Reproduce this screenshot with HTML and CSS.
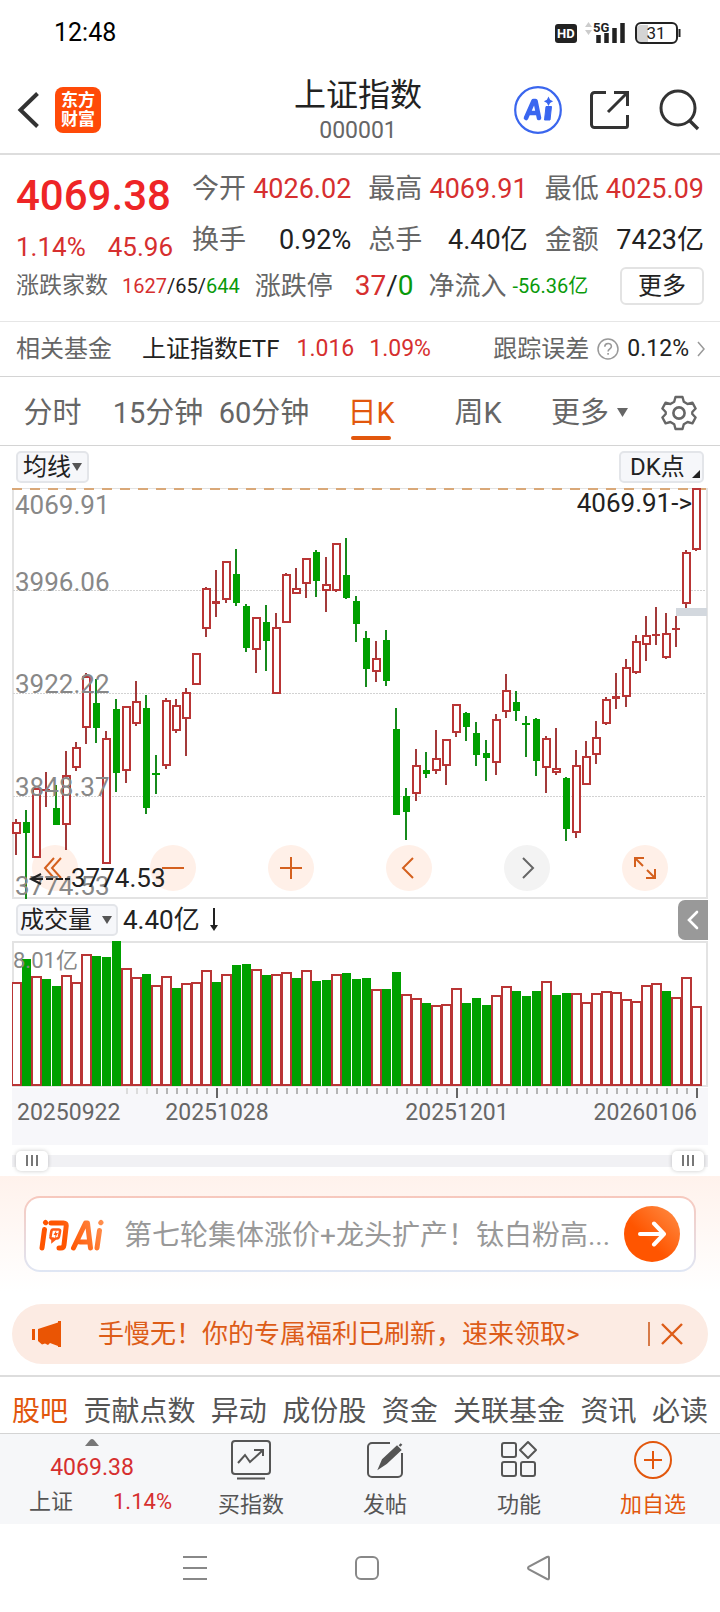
FILE: index.html
```html
<!DOCTYPE html>
<html lang="zh-CN">
<head>
<meta charset="utf-8">
<meta name="viewport" content="width=device-width, initial-scale=1">
<title>上证指数 000001</title>
<link rel="stylesheet" href="styles.css">
</head>
<body>
<div class="status">
  <time class="clock">12:48</time>
  <svg class="status-icons" width="126" height="26" viewBox="0 0 126 26" role="img" aria-label="HD 5G 31%">
    <rect x="0" y="4" width="22" height="19" rx="3" fill="#222"/>
    <text x="2" y="18" font-size="13" font-weight="700" fill="#fff">HD</text>
    <path d="M30 7l3.500-5L37 7zM30 10l3.500 5 3.500-5z" fill="#ccc"/>
    <text x="38" y="12" font-size="13" font-weight="700" fill="#222">5G</text>
    <path d="M43.500 15v8M51.500 13v10M59.500 8v15M67.500 3v20" stroke="#222" stroke-width="4.500"/>
    <path d="M93 5v17h-7a4 4 0 0 1-4-4V9a4 4 0 0 1 4-4z" fill="#d4d4d4"/>
    <rect x="81" y="3" width="41" height="20" rx="5" fill="none" stroke="#222" stroke-width="2"/>
    <path d="M124.500 9v8" stroke="#222" stroke-width="2"/>
    <text x="101" y="19" font-size="17" text-anchor="middle" fill="#222">31</text>
  </svg>
</div>

<header class="header">
  <div class="header-left">
    <button class="icon-btn" aria-label="返回"><svg width="24" height="40" viewBox="0 0 24 40"><path d="M21.500 3.500L4.500 20l17 16.500" fill="none" stroke="#333" stroke-width="4"/></svg></button>
    <span class="logo"><span>东方</span><span>财富</span></span>
  </div>
  <div class="header-title">
    <h1>上证指数</h1>
    <p>000001</p>
  </div>
  <div class="header-right">
    <button class="icon-btn" aria-label="Ai"><svg width="48" height="48" viewBox="0 0 48 48"><circle cx="24" cy="24" r="22.800" fill="#fff" stroke="#3a66ee" stroke-width="2.200"/><path d="M12 32L19.500 15h2L25 32M15.500 27h8" fill="none" stroke="#3a66f0" stroke-width="4.600" stroke-linejoin="round" stroke-linecap="round"/><path d="M32 20.500h5.500L36 34h-5.500z" fill="#3a66f0" stroke="#3a66f0" stroke-linejoin="round"/><path d="M34.500 10.500l1.600 3.200 3 1.600-3 1.600-1.600 3-1.600-3-3-1.600 3-1.600z" fill="#3a66f0"/></svg></button>
    <button class="icon-btn" aria-label="分享"><svg width="42" height="42" viewBox="0 0 42 42"><path d="M17 3.500H5.500a3 3 0 0 0-3 3v29a3 3 0 0 0 3 3h31a2 2 0 0 0 2-2V26M25 3.500h13.500V17M38 4L19 23" fill="none" stroke="#333" stroke-width="3"/></svg></button>
    <button class="icon-btn" aria-label="搜索"><svg width="42" height="42" viewBox="0 0 42 42"><circle cx="20" cy="19" r="17" fill="none" stroke="#333" stroke-width="3"/><path d="M31 31l9 9" stroke="#333" stroke-width="3.400"/></svg></button>
  </div>
</header>

<section class="quote">
  <div class="quote-main">
    <div class="price">
      <strong>4069.38</strong>
      <p><span>1.14%</span><span>45.96</span></p>
    </div>
    <dl class="stats">
      <div><dt>今开</dt><dd class="up">4026.02</dd></div>
      <div><dt>最高</dt><dd class="up">4069.91</dd></div>
      <div><dt>最低</dt><dd class="up">4025.09</dd></div>
      <div><dt>换手</dt><dd>0.92%</dd></div>
      <div><dt>总手</dt><dd>4.40亿</dd></div>
      <div><dt>金额</dt><dd>7423亿</dd></div>
    </dl>
  </div>
  <div class="breadth">
    <span class="lbl-s">涨跌家数</span>
    <span class="num-s"><b class="up">1627</b>/65/<b class="down">644</b></span>
    <span class="lbl">涨跌停</span>
    <span class="num-l"><b class="up">37</b>/<b class="down">0</b></span>
    <span class="lbl">净流入</span>
    <span class="num-s down">-56.36亿</span>
    <button class="more">更多</button>
  </div>
</section>

<section class="fund">
  <span class="muted">相关基金</span>
  <a class="fund-name" href="#etf">上证指数ETF</a>
  <span class="up fund-num">1.016</span>
  <span class="up fund-num">1.09%</span>
  <span class="fund-err"><span class="muted">跟踪误差</span><svg width="22" height="22" viewBox="0 0 22 22" aria-hidden="true"><circle cx="11" cy="11" r="10" fill="none" stroke="#999" stroke-width="1.500"/><path d="M7.800 8.700c0-4.200 6.600-4.200 6.600-.3 0 2.300-3.300 2.500-3.300 5M11.100 15v1.800" fill="none" stroke="#999" stroke-width="1.600"/></svg><span class="fund-num">0.12%</span><svg width="8" height="16" viewBox="0 0 8 16" aria-hidden="true"><path d="M1 1l6 7-6 7" fill="none" stroke="#999" stroke-width="1.500"/></svg></span>
</section>

<nav class="periods">
  <button>分时</button>
  <button>15分钟</button>
  <button>60分钟</button>
  <button class="active">日K</button>
  <button>周K</button>
  <button>更多<svg width="11" height="11" viewBox="0 0 11 11" aria-hidden="true"><path d="M0 1h11L5.500 10z" fill="#666"/></svg></button>
  <button aria-label="设置"><svg width="36" height="36" viewBox="0 0 36 36"><path d="M14.500 2h7l1.300 4.800 3.800 2.200 4.800-1.300 3.200 5.800-3.300 3.500v2l3.300 3.500-3.200 5.800-4.800-1.300-3.800 2.200L21.500 34h-7l-1.300-4.800L9.400 27l-4.800 1.300-3.200-5.800L4.700 19v-2l-3.300-3.500 3.200-5.800L9.400 9l3.800-2.200z" fill="none" stroke="#666" stroke-width="2.400" stroke-linejoin="round"/><circle cx="18" cy="18" r="5.600" fill="none" stroke="#666" stroke-width="2.600"/></svg></button>
</nav>

<main class="charts">
  <div class="bar-top">
    <button class="chip chip-ma">均线<svg width="10" height="10" viewBox="0 0 10 10" aria-hidden="true"><path d="M0 1h10L5 9z" fill="#555"/></svg></button>
    <button class="chip chip-dk">DK点<svg width="8" height="8" viewBox="0 0 8 8" aria-hidden="true"><path d="M8 0v8H0z" fill="#222"/></svg></button>
  </div>
  <div class="kline">
    <svg class="plot" id="kline" viewBox="0 0 696 411" role="img" aria-label="日K线图"></svg>
    <div class="tools">
      <button aria-label="最早"><svg width="24" height="24" viewBox="0 0 24 24"><path d="M11 2L2 12l9 10M18 2L9 12l9 10"/></svg></button>
      <button aria-label="缩小"><svg width="24" height="24" viewBox="0 0 24 24"><path d="M1 12h22"/></svg></button>
      <button aria-label="放大"><svg width="24" height="24" viewBox="0 0 24 24"><path d="M1 12h22M12 1v22"/></svg></button>
      <button aria-label="向左"><svg width="24" height="24" viewBox="0 0 24 24"><path d="M16 2L6 12l10 10"/></svg></button>
      <button class="off" aria-label="向右"><svg width="24" height="24" viewBox="0 0 24 24"><path d="M8 2l10 10L8 22"/></svg></button>
      <button aria-label="全屏"><svg width="24" height="24" viewBox="0 0 24 24"><path d="M11 2H2v9M2 2l8 8M22 13v9h-9M22 22l-8-8"/></svg></button>
    </div>
  </div>
  <div class="bar-vol">
    <button class="chip chip-vol">成交量<svg width="10" height="10" viewBox="0 0 10 10" aria-hidden="true"><path d="M0 1h10L5 9z" fill="#555"/></svg></button>
    <span>4.40亿</span>
    <svg width="10" height="24" viewBox="0 0 10 24" aria-hidden="true"><path d="M5 0v20" stroke="#222" stroke-width="2"/><path d="M1 17h8l-4 6z" fill="#222"/></svg>
    <button class="fold" aria-label="展开"><svg width="12" height="20" viewBox="0 0 12 20"><path d="M10 2L2 10l8 8" fill="none" stroke="#fff" stroke-width="2.600" stroke-linecap="round"/></svg></button>
  </div>
  <svg class="plot" id="volume" viewBox="0 0 696 204" role="img" aria-label="成交量图"></svg>
  <div class="range">
    <span class="grip"><i></i><i></i><i></i></span>
    <span class="grip"><i></i><i></i><i></i></span>
  </div>
</main>

<section class="ask">
  <form class="ask-box">
    <svg class="ask-logo" width="66" height="40" viewBox="0 0 66 40" role="img" aria-label="问Ai">
      <defs><linearGradient id="lg" gradientUnits="userSpaceOnUse" x1="0" y1="36" x2="66" y2="4"><stop offset=".4" stop-color="#ff5500"/><stop offset="1" stop-color="#ff9455"/></linearGradient></defs>
      <g fill="none" stroke="url(#lg)" stroke-width="5" stroke-linecap="round" stroke-linejoin="round">
        <path d="M6.500 15.500L4 34M7.500 8.500l.2.200M13 9h12.500q3 0 2.700 3L26 31q-.4 3-3 3h-2M35.500 34L47.500 9h2l3 25M42 28h8M61.500 16.500L59 34M63 8.500l-.2.200"/>
      </g>
      <path d="M15 15.500h5.500q2 0 1.500 2l-1 5q-.5 2-2 2h-1.500l-3 2.500v-2.500q-2.500 0-2-2l.8-5q.3-2 1.700-2z" fill="none" stroke="#ff5a14" stroke-width="2.600"/>
      <path d="M18.500 16l-3 5h2l-.5 3 3-5h-2z" fill="#ff5a14"/>
    </svg>
    <input type="text" aria-label="问Ai" placeholder="第七轮集体涨价+龙头扩产！钛白粉高...">
    <button type="button" class="go" aria-label="发送"><svg width="28" height="28" viewBox="0 0 28 28"><path d="M2 14h23M16 3.500L26 14 16 24.500" fill="none" stroke="#fff" stroke-width="4" stroke-linecap="round" stroke-linejoin="round"/></svg></button>
  </form>
</section>

<aside class="promo">
  <svg width="32" height="28" viewBox="0 0 32 28" aria-hidden="true"><path d="M1 9h3v11H1zM7 9l20-6.500V26l-8-3-2 2-3-1.500-3 1-4-3.500z" fill="#ea5504"/><path d="M27 1h3v26h-3z" fill="#ea5504"/></svg>
  <a href="#gift">手慢无！你的专属福利已刷新，速来领取&gt;</a>
  <button aria-label="关闭"><svg width="24" height="24" viewBox="0 0 24 24"><path d="M2 2l20 20M22 2L2 22" stroke="#dd5c18" stroke-width="2.400"/></svg></button>
</aside>

<nav class="topics">
  <a class="active" href="#bar">股吧</a><a href="#pts">贡献点数</a><a href="#mv">异动</a><a href="#cons">成份股</a><a href="#cap">资金</a><a href="#funds">关联基金</a><a href="#news">资讯</a><a href="#read">必读</a>
</nav>

<nav class="dock">
  <a class="dock-index" href="#index">
    <svg width="14" height="7" viewBox="0 0 14 7" aria-hidden="true"><path d="M0 7l5-6q2-2 4 0l5 6z" fill="#777"/></svg>
    <span class="up">4069.38</span>
    <span class="dock-row"><span>上证</span><span class="up">1.14%</span></span>
  </a>
  <a class="dock-item" href="#buy"><svg width="42" height="42" viewBox="0 0 42 42"><rect x="2" y="2" width="38" height="33" rx="3"/><path d="M7 39.500h28M8 24l7-8 5 7 12-11M24 11h9v6"/></svg>买指数</a>
  <a class="dock-item" href="#post"><svg width="42" height="42" viewBox="0 0 42 42"><path d="M26 4H8a4 4 0 0 0-4 4v26a4 4 0 0 0 4 4h26a4 4 0 0 0 4-4V14"/><path d="M16 28l3-7L33 8l3 3-14 13zM35.500 7l2-2" stroke-width="2.400" fill="#555"/></svg>发帖</a>
  <a class="dock-item" href="#func"><svg width="42" height="42" viewBox="0 0 42 42"><rect x="4" y="4" width="14" height="14" rx="2"/><rect x="4" y="23" width="14" height="14" rx="2"/><rect x="23" y="23" width="14" height="14" rx="2"/><path d="M30 3l8 8-8 8-8-8z" stroke-linejoin="round"/></svg>功能</a>
  <a class="dock-item hot" href="#add"><svg width="42" height="42" viewBox="0 0 42 42"><circle cx="21" cy="21" r="18"/><path d="M21 12v18M12 21h18"/></svg>加自选</a>
</nav>

<div class="sysnav">
  <button aria-label="任务"><svg width="26" height="26" viewBox="0 0 26 26"><path d="M1 2h24M1 13h24M1 24h24"/></svg></button>
  <button aria-label="主页"><svg width="26" height="26" viewBox="0 0 26 26"><rect x="2" y="2" width="22" height="22" rx="5"/></svg></button>
  <button aria-label="后退"><svg width="26" height="26" viewBox="0 0 26 26"><path d="M23 3v20q0 2-2 1L3 14.500q-2-1.500 0-3L21 2q2-1 2 1z"/></svg></button>
</div>
<script src="chart.js"></script>
</body>
</html>
```

FILE: styles.css
```css
* { box-sizing: border-box; }
body {
  margin: 0;
  background: #fff;
  color: #222;
  font-family: Roboto, "Noto Sans CJK SC", sans-serif;
  font-size: 24px;
  line-height: 32px;
}
h1, p, dl, dd { margin: 0; }
h1, b { font-weight: 400; }
a { color: inherit; text-decoration: none; }
button { margin: 0; padding: 0; border: 0; background: none; color: inherit; font: inherit; }
svg { display: block; flex: none; }
.up { color: #d62f2f; }
.down { color: #0a9a0a; }
.muted { color: #666; }

.status { display: flex; justify-content: space-between; align-items: center; height: 65px; padding: 0 39px 0 54px; }
.clock { font-size: 25px; color: #000; }

.header { display: grid; grid-template-columns: 1fr auto 1fr; align-items: center; height: 90px; padding: 2px 20px 0 16px; border-bottom: 2px solid #ddd; }
.header-left { display: flex; align-items: center; gap: 15px; }
.logo { display: flex; flex-direction: column; align-items: center; justify-content: center; width: 46px; height: 46px; border-radius: 8px; background: #ff4a08; color: #fff; font-size: 17px; font-weight: 700; line-height: 19px; }
.header-title { text-align: center; }
.header-title h1 { font-size: 32px; line-height: 42px; }
.header-title p { color: #666; font-size: 23px; line-height: 30px; }
.header-right { display: flex; align-items: center; justify-content: flex-end; gap: 27px; }

.quote { padding: 12px 16px 0; border-bottom: 1px solid #e6e6e6; height: 167px; }
.quote-main { display: flex; justify-content: space-between; gap: 16px; }
.price { flex: none; color: #d62f2f; }
.price strong { display: block; padding-top: 4px; color: #ee2526; font-size: 42px; font-weight: 500; line-height: 50px; }
.price p { display: flex; gap: 22px; padding-top: 10px; font-size: 26px; }
.stats { flex: 1; max-width: 512px; display: grid; grid-template-columns: repeat(3, 1fr); column-gap: 17px; row-gap: 6px; }
.stats div { display: flex; justify-content: space-between; align-items: center; height: 44px; font-size: 27px; white-space: nowrap; }
.stats dt { color: #666; }
.breadth { display: flex; align-items: center; margin-top: 4px; white-space: nowrap; }
.lbl, .lbl-s { color: #666; }
.lbl { font-size: 26px; }
.lbl-s { font-size: 23px; }
.num-s { font-size: 20px; margin: 0 15px 0 14px; }
.num-l { font-size: 28px; margin: 0 15px 0 22px; }
.num-s.down { margin: 0 0 0 6px; }
.more { width: 84px; height: 38px; margin-left: auto; border: 2px solid #e3e3e3; border-radius: 6px; line-height: 32px; }

.fund { display: flex; align-items: center; height: 55px; padding: 0 15px 0 16px; border-bottom: 1px solid #d4d4d4; white-space: nowrap; }
.fund-name { margin: 0 2px 0 30px; }
.fund-num { font-size: 23px; }
.fund > .fund-num { margin-left: 15px; }
.fund-err { display: flex; align-items: center; gap: 8px; margin-left: auto; }

.periods { display: grid; grid-template-columns: 105px 106px 106px 108px 106px 1fr 82px; height: 69px; border-bottom: 1px solid #d4d4d4; color: #666; font-size: 29px; }
.periods button { display: flex; align-items: center; justify-content: center; gap: 8px; padding-top: 3px; white-space: nowrap; }
.periods button:nth-child(6) { justify-content: flex-end; padding-right: 10px; }
.periods .active { position: relative; color: #e2570d; }
.periods .active::after { content: ""; position: absolute; bottom: 5px; width: 40px; height: 4px; border-radius: 2px; background: #e2570d; }

.charts { padding: 0 12px; }
.bar-top { display: flex; justify-content: space-between; align-items: center; height: 42px; padding: 0 4px; }
.chip { display: flex; align-items: center; justify-content: space-between; height: 32px; padding: 0 5px; border: 2px solid #e3e5e9; border-radius: 5px; background: #f6f7fa; line-height: 28px; white-space: nowrap; }
.chip-ma { width: 73px; }
.chip-dk { width: 85px; padding: 0 2px 0 9px; }
.chip-dk svg { align-self: flex-end; margin-bottom: 3px; }
.chip-vol { width: 102px; padding: 0 4px 0 2px; }
.plot { width: 100%; height: auto; }
.plot text { font-size: 26px; }
.plot .grey { fill: #888; }
.plot .dark { fill: #222; }
.plot .unit { font-size: 22px; }
.plot .date { fill: #666; font-size: 23px; }
.kline { position: relative; }
.kline .plot { position: relative; z-index: 1; pointer-events: none; }
.tools { position: absolute; left: 20px; right: 40px; bottom: 8px; display: flex; justify-content: space-between; }
.tools button { display: flex; align-items: center; justify-content: center; width: 46px; height: 46px; border-radius: 50%; background: #fff0e8; }
.tools .off { background: #f3f3f3; }
.tools path { fill: none; stroke: #d4601e; stroke-width: 2; }
.tools .off path { stroke: #666; }
.bar-vol { display: flex; align-items: center; height: 42px; padding-left: 4px; font-size: 26px; }
.bar-vol .chip { margin-right: 5px; font-size: 24px; }
.bar-vol > svg { margin-left: 9px; }
.fold { display: flex; align-items: center; justify-content: center; width: 30px; height: 40px; margin-left: auto; border-radius: 7px 0 0 7px; background: #999; }
.range { display: flex; align-items: center; justify-content: space-between; height: 31px; padding: 0 4px; background: linear-gradient(#f1f1f4, #f1f1f4) center / 100% 12px no-repeat; }
.grip { display: flex; align-items: center; justify-content: center; gap: 3px; width: 32px; height: 20px; border-radius: 5px; background: #fff; box-shadow: 0 0 4px rgba(0, 0, 0, .22); }
.grip i { width: 2px; height: 11px; background: #777; }

.ask { padding: 20px 24px 32px; background: linear-gradient(#fff2ec, #fff 90%); }
.ask-box { display: flex; align-items: center; height: 76px; padding: 0 14px 0 12px; border: 2px solid transparent; border-radius: 16px; background: linear-gradient(#fff, #fff) padding-box, linear-gradient(#f7c8bd, #dfe6f4) border-box; }
.ask-box input { flex: 1; min-width: 0; margin: 0 12px 0 20px; padding: 4px 0 0; border: 0; outline: 0; background: none; font: inherit; font-size: 28px; line-height: 40px; }
.ask-box input::placeholder { color: #999; opacity: 1; }
.go { display: flex; align-items: center; justify-content: center; width: 56px; height: 56px; border-radius: 50%; background: linear-gradient(45deg, #ff5500 40%, #ff8f48); }

.promo { display: flex; align-items: center; height: 60px; margin: 0 12px 11px; padding: 0 24px 0 19px; border-radius: 30px; background: #fcebe3; color: #dd5c18; font-size: 26px; white-space: nowrap; }
.promo a { margin-left: 35px; }
.promo button { margin-left: auto; padding-left: 10px; border-left: 2px solid #d77a48; }

.topics { display: flex; justify-content: space-between; align-items: center; height: 59px; padding: 13px 12px 0; border-top: 2px solid #ddd; border-bottom: 1px solid #d4d4d4; color: #555; font-size: 28px; white-space: nowrap; }
.topics .active { color: #e2570d; }

.dock { display: grid; grid-template-columns: 184px repeat(4, 1fr); height: 90px; background: #f6f7f9; color: #555; font-size: 22px; }
.dock-index { display: flex; flex-direction: column; align-items: center; padding-top: 5px; }
.dock-index > .up { padding-top: 2px; font-size: 23px; line-height: 40px; }
.dock-row { display: flex; justify-content: space-between; align-self: stretch; padding: 0 12px 0 29px; line-height: 28px; }
.dock-item { display: flex; flex-direction: column; align-items: center; gap: 8px; padding-top: 5px; }
.dock-item svg { fill: none; stroke: #555; stroke-width: 2; }
.dock .hot { color: #e2570d; }
.dock .hot svg { stroke: #e2570d; }

.sysnav { display: flex; justify-content: center; align-items: center; gap: 146px; height: 88px; padding-left: 14px; }
.sysnav svg { fill: none; stroke: #888; stroke-width: 2; }
```

FILE: chart.js
```js
const RED = "#b93535";
const GREEN = "#00a000";
const STEP = 10;

// Each row: direction, high, body top, body bottom, low (three units per pixel).
const candles = `
R 1018 1027 1061 1124|G 990 1025 1058 1256|R 925 925 1134 1134|R 875 926 932 981|G 915 984 1034 1034
R 812 886 1035 1110|R 785 802 863 873|R 580 589 743 792|G 597 669 745 790|R 752 774 1153 1153
G 656 688 878 937|R 679 679 872 910|R 603 662 733 737|G 645 684 985 1002|G 826 878 884 941
R 653 661 858 866|R 656 674 752 760|R 624 637 718 827|R 520 520 614 614|R 320 325 446 470
R 270 362 373 412|R 244 244 359 369|G 208 283 370 378|G 371 378 504 517|R 411 411 509 579
G 375 426 482 573|R 400 441 641 641|R 280 282 430 430|R 265 324 342 342|R 235 235 311 354
G 211 216 304 351|R 231 313 332 396|R 190 190 333 337|G 174 286 355 357|G 348 363 432 487
G 454 473 567 622|R 483 535 577 607|G 450 480 603 618|G 684 747 1005 1005|G 924 947 997 1081
R 808 855 942 962|G 817 870 882 895|R 751 834 873 882|R 778 778 857 916|R 673 673 760 771
G 697 699 742 782|G 727 758 825 858|G 780 819 833 904|R 701 718 849 886|R 582 631 697 713
G 633 665 693 724|G 708 728 735 831|G 713 717 844 888|R 768 774 863 939|R 745 865 880 884
G 891 894 1047 1084|R 810 855 1058 1075|R 782 829 914 914|R 723 771 826 851|R 650 657 733 735
R 578 648 657 688|R 537 560 650 682|R 465 482 578 582|R 408 465 494 543|R 382 461 467 495
R 399 459 535 537|R 408 444 451 501|R 210 215 373 384|R 25 25 209 212`;

const volumes = `
R262 G192 R244 G253 G273 R240 R262 R177 G183 G187 G139 R220 R247 G238 R271 R244 G279 R264 R262 R224
G260 R238 G210 G207 R222 G240 R236 R230 G249 R226 G257 G255 R238 G235 G252 G250 R283 G283 G230 R297
R310 G325 R330 R327 R279 G325 G310 G331 R299 R274 G288 G303 G288 R259 G301 G294 R293 R321 R293 R288
R290 R313 R317 R270 R265 G288 R306 R247 R333`;

const rect = (x, y, w, h, fill) =>
  `<rect x="${x}" y="${y}" width="${w}" height="${h}" fill="${fill}"/>`;
const hollow = (x, y, w, h) =>
  `<rect x="${x + 1}" y="${y + 1}" width="${w - 2}" height="${Math.max(h - 2, 1)}" fill="#fff" stroke="${RED}" stroke-width="2"/>`;
const text = (x, y, cls, s, anchor = "start") =>
  `<text x="${x}" y="${y}" class="${cls}" text-anchor="${anchor}">${s}</text>`;

function drawKline() {
  const y = v => Math.round((v - 24) / 3);
  let out = `<rect x="1" y="0" width="694" height="410" fill="none" stroke="#e3e3e3" stroke-width="2"/>`;
  for (const g of [102, 205, 308]) {
    out += `<path d="M1 ${g}.5H694" stroke="#d2d2d2" stroke-dasharray="2 1"/>`;
  }
  out += `<path d="M0 1H694" stroke="#d9a878" stroke-width="2" stroke-dasharray="10 8"/>`;
  out += rect(664, 120, 31, 8, "#d3d8de");
  candles.trim().split(/[|\n]/).forEach((row, i) => {
    const [dir, ...v] = row.split(" ");
    const [hi, top, bot, lo] = v.map(n => y(+n));
    const x = i * STEP;
    const colour = dir === "R" ? "#a33a3a" : "#168a1c";
    out += rect(x + 3, hi, 2, lo - hi, colour);
    if (bot - top < 4) out += rect(x, top, 8, Math.max(bot - top, 2), dir === "R" ? RED : GREEN);
    else if (dir === "R") out += hollow(x, top, 9, bot - top);
    else out += rect(x + 1, top, 7, bot - top, GREEN);
  });
  out += text(3, 26, "grey", "4069.91") + text(3, 103, "grey", "3996.06") +
    text(3, 205, "grey", "3922.22") + text(3, 308, "grey", "3848.37") +
    text(3, 407, "grey", "3774.53");
  out += text(59, 399, "dark", "3774.53") + text(680, 24, "dark", "4069.91-&gt;", "end");
  out += `<path d="M29 386l-10 5 10 5M21 391h10M34 391h7M44 391h7M53 391h5" fill="none" stroke="#222" stroke-width="2"/>`;
  document.getElementById("kline").innerHTML = out;
}

function drawVolume() {
  const base = 145;
  let out = rect(0, 147, 696, 57, "#f7f7fa");
  out += `<rect x="1" y="1" width="694" height="144" fill="#fff" stroke="#e3e3e3" stroke-width="2"/>`;
  volumes.trim().split(/\s+/).forEach((item, i) => {
    const top = Math.round((item.slice(1) - 138) / 3);
    const x = i * STEP;
    out += item[0] === "R"
      ? hollow(x - 1, top, 11, base - top)
      : rect(x, top, 9, base - top, GREEN);
    if (i > 10) {
      const major = i === 20 || i === 44 || i === 68;
      const tick = i < 14 ? "#dcdcdc" : "#b5b5b5";
      out += rect(x + 4, 147, 2, major ? 10 : 6, major ? "#666" : tick);
    }
  });
  out += text(1, 27, "grey unit", "8.01亿");
  out += text(5, 179, "date", "20250922") + text(205, 179, "date", "20251028", "middle") +
    text(445, 179, "date", "20251201", "middle") + text(685, 179, "date", "20260106", "end");
  document.getElementById("volume").innerHTML = out;
}

drawKline();
drawVolume();
```
